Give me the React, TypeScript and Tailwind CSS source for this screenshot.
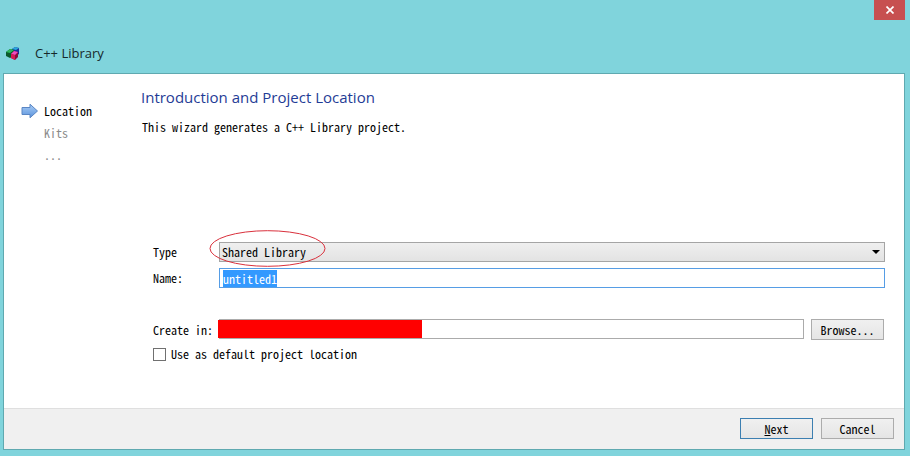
import React, { useEffect, useRef, useState } from 'react';

const STEPS = ['Location', 'Kits', '...'];

const BUTTON =
  'h-[21px] w-[73px] border bg-linear-to-b from-[#f0f0f0] to-[#e5e5e5] text-center leading-4';

/** Three stacked cubes shown next to the window title */
const AppIcon: React.FC = () => (
  <svg className="size-4" viewBox="0 0 16 16" aria-hidden="true">
    <path d="M7 4l3-2 4 1v6l-3 2-4-1z" fill="#1a2f9c" />
    <path d="M7 4l3-2 4 1-3 2z" fill="#28a9dc" />
    <path d="M1 7l4-3 4 1v6l-4 2-4-2z" fill="#0a5a2c" />
    <path d="M1 7l4-3 4 1-4 3z" fill="#2bb85c" />
    <path d="M6 9l3-3 4 1v5l-3 3-4-2z" fill="#8a0b3e" />
    <path d="M6 9l3-3 4 1-3 3z" fill="#f04cc0" />
    <path d="M6 9l4 1v5l-4-2z" fill="#d81a56" />
  </svg>
);

const StepArrow: React.FC = () => (
  <svg className="h-4 w-[18px]" viewBox="0 0 18 16" aria-hidden="true">
    <defs>
      <linearGradient id="arrow" x1="0" y1="0" x2="0" y2="1">
        <stop offset="0" stopColor="#a9cdf6" />
        <stop offset="1" stopColor="#5b93dc" />
      </linearGradient>
    </defs>
    <path d="M1 4.500h8v-3.300l7.500 6.800-7.500 6.800v-3.300h-8z" fill="url(#arrow)" stroke="#5a86c4" />
  </svg>
);

const Steps: React.FC = () => (
  <ol className="w-[137px] shrink-0 pt-[26px] pl-[17px]">
    {STEPS.map((step, i) => (
      <li
        key={step}
        className={`flex h-[22px] items-center gap-[5px] ${i === 0 ? 'text-black' : 'text-[#8a8a8a]'}`}
      >
        <span className="w-[18px]">{i === 0 && <StepArrow />}</span>
        {step}
      </li>
    ))}
  </ol>
);

export default function App() {
  const nameRef = useRef<HTMLInputElement>(null);
  const [name, setName] = useState('untitled1');

  // the suggested name starts out selected, ready to be typed over
  useEffect(() => {
    nameRef.current?.focus();
    nameRef.current?.select();
  }, []);

  return (
    <div className="flex min-h-screen flex-col bg-[#80d4dc] pr-[5px] pb-[6px] pl-[3px] font-['Noto_Sans_Mono_CJK_SC','Liberation_Mono',monospace] text-[12px] leading-4 text-black">
      <header className="flex h-[73px] items-start justify-between">
        <div className="mb-[10px] flex h-5 items-center gap-[14px] self-end pl-[2px] font-['Open_Sans','Noto_Sans',sans-serif] text-[13px] text-[#16282b]">
          <AppIcon />
          <h1>C++ Library</h1>
        </div>
        <button
          type="button"
          aria-label="Close"
          className="flex h-5 w-[31px] items-center justify-center bg-[#c75050]"
        >
          <svg className="size-2" viewBox="0 0 8 8" aria-hidden="true">
            <path d="M.5.5l7 7M7.500.5l-7 7" stroke="#fff" strokeWidth="1.700" />
          </svg>
        </button>
      </header>

      <main className="flex flex-1 flex-col border border-[#5fa9b0] bg-white">
        <div className="flex flex-1">
          <Steps />

          <form className="min-w-0 flex-1 pt-3 pr-[19px] pb-8">
            <h2 className="font-['Open_Sans','Noto_Sans',sans-serif] text-[15px] leading-[22px] text-[#1f3c96]">
              Introduction and Project Location
            </h2>
            <p className="mt-[11px] pl-px">This wizard generates a C++ Library project.</p>

            <div className="mt-[107px] grid grid-cols-[66px_1fr] items-center gap-y-[6px] pl-3">
              <label htmlFor="type">Type</label>
              <div className="relative">
                <select
                  id="type"
                  className="block h-5 w-full appearance-none border border-[#a5a5a5] bg-linear-to-b from-[#efefef] to-[#e3e3e3] pl-[2px]"
                >
                  <option>Shared Library</option>
                  <option>Statically Linked Library</option>
                  <option>Qt Plugin</option>
                </select>
                <svg
                  className="pointer-events-none absolute top-2 right-[5px] h-1 w-2"
                  viewBox="0 0 8 4"
                  aria-hidden="true"
                >
                  <path d="M0 0h8l-4 4z" />
                </svg>
                <svg
                  className="pointer-events-none absolute -top-3 -left-[10px] h-[37px] w-[117px]"
                  viewBox="0 0 117 37"
                  aria-hidden="true"
                >
                  <ellipse cx="58.500" cy="18.500" rx="57.500" ry="17.800" fill="none" stroke="#d9303c" />
                </svg>
              </div>

              <label htmlFor="name">Name:</label>
              <input
                id="name"
                ref={nameRef}
                value={name}
                onChange={(e) => setName(e.target.value)}
                className="h-5 w-full border border-[#569de5] bg-white pl-[3px] leading-4 outline-none selection:bg-[#3399ff] selection:text-white"
              />
            </div>

            <div className="mt-[31px] grid grid-cols-[66px_1fr_auto] items-start pl-3">
              <label htmlFor="path" className="self-center whitespace-nowrap">
                Create in:
              </label>
              <div className="relative">
                <input id="path" className="block h-5 w-full border border-[#ababab] bg-white" />
                {/* hides the user's path */}
                <div className="absolute top-px -left-px h-[18px] w-[204px] bg-[#ff0000]" />
              </div>
              <button type="button" className={`${BUTTON} mr-px ml-[7px] border-[#acacac]`}>
                Browse...
              </button>
            </div>

            <label className="mt-[6px] flex items-center gap-[5px] pl-3">
              <input
                type="checkbox"
                className="size-[13px] appearance-none border border-[#707070] bg-white checked:bg-[#3399ff]"
              />
              Use as default project location
            </label>
          </form>
        </div>

        <footer className="flex justify-end gap-2 border-t border-[#dfdfdf] bg-[#f0f0f0] pt-[9px] pr-[10px] pb-[10px]">
          <button type="button" className={`${BUTTON} border-[#3c7fb1]`}>
            <u>N</u>ext
          </button>
          <button type="button" className={`${BUTTON} border-[#acacac]`}>
            Cancel
          </button>
        </footer>
      </main>
    </div>
  );
}
